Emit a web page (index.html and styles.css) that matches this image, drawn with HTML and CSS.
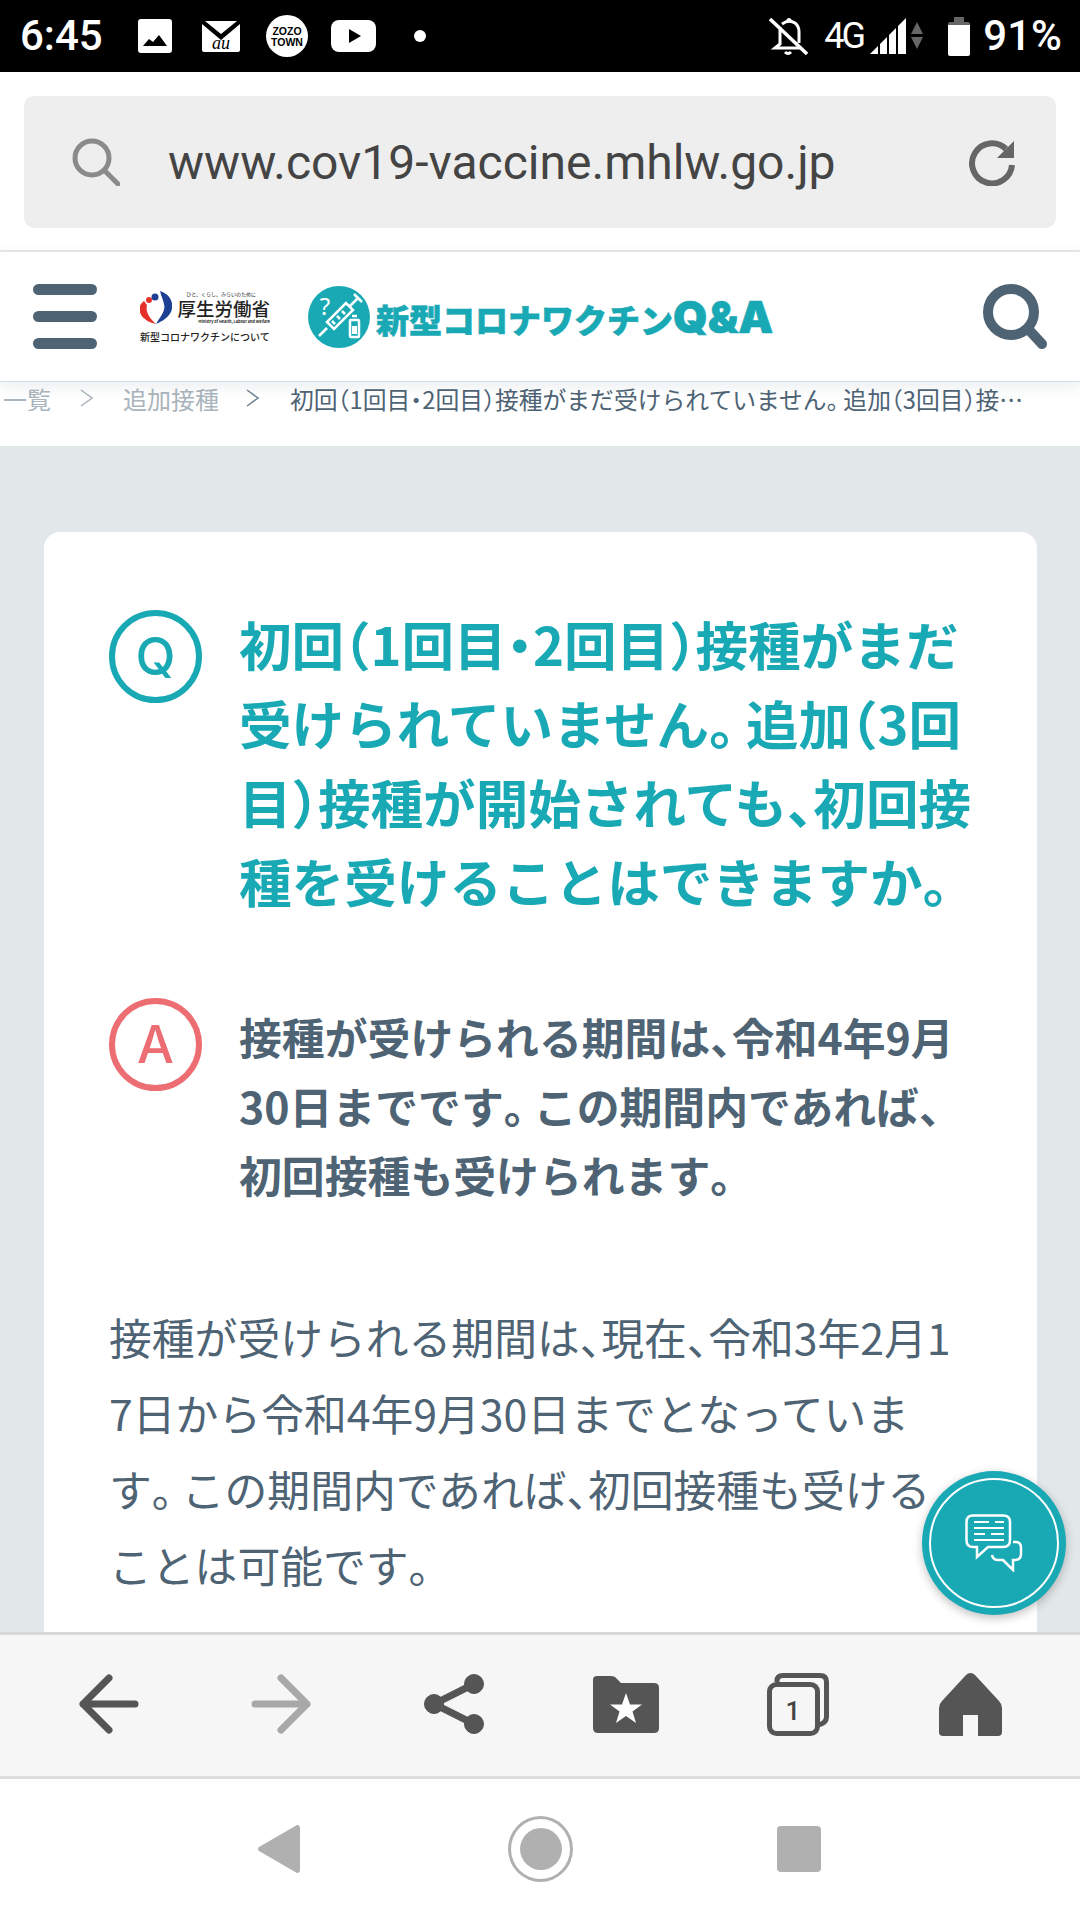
FILE: index.html
```html
<!DOCTYPE html>
<html lang="ja">
<head>
  <meta charset="UTF-8" />
  <title>新型コロナワクチンQ&amp;A</title>
  <meta name="viewport" content="width=device-width, initial-scale=1.0" />
  <link rel="stylesheet" href="styles.css">
</head>
<body>
  <div class="status-bar">
    <div class="status-left">
      <span class="status-time">6:45</span>
      <svg class="ico-image" width="34" height="34" viewBox="0 0 34 34"><rect width="34" height="34" rx="3" fill="#fff"/><path d="M5 27 L11 20 L15 23 L21 16 L29 27Z" fill="#000"/></svg>
      <svg class="ico-mail" width="38" height="31" viewBox="0 0 38 31"><path d="M3 0H35L19 13Z" fill="#fff"/><path d="M0 3L19 19L38 3V29Q38 31 36 31H2Q0 31 0 29Z" fill="#fff"/><text x="19" y="28" text-anchor="middle" class="mail-au">au</text></svg>
      <svg class="ico-zozo" width="42" height="42" viewBox="0 0 42 42"><circle cx="21" cy="21" r="21" fill="#fff"/><text x="21" y="20" text-anchor="middle" class="zozo-text">ZOZO</text><text x="21" y="31" text-anchor="middle" class="zozo-text">TOWN</text></svg>
      <svg class="ico-yt" width="45" height="32" viewBox="0 0 45 32"><rect width="45" height="32" rx="8" fill="#fff"/><path d="M18 9L30 16L18 23Z" fill="#000"/></svg>
      <span class="status-dot"></span>
    </div>
    <div class="status-right">
      <svg class="ico-bell" width="39" height="39" viewBox="0 0 39 39" fill="none" stroke="#fff" stroke-width="3"><path d="M11 10V27L6 31H31"/><path d="M13 7Q20 2 26 6Q30 9 30 15V26"/><path d="M16 35Q19 38 22 35"/><path d="M18 5Q20 0 22 5"/><path d="M1 2L38 37" stroke-width="3.500"/></svg>
      <span class="status-net">4G</span>
      <svg class="ico-signal" width="36" height="36" viewBox="0 0 36 36" fill="#fff"><path d="M0 36L8 28V36Z"/><path d="M10 36V26L17 19V36Z"/><path d="M19 36V17L26 10V36Z"/><path d="M28 36V8L36 0V36Z"/></svg>
      <svg class="ico-arrows" width="12" height="28" viewBox="0 0 12 28" fill="#666"><path d="M6 0L12 12H0Z"/><path d="M0 15H12L6 27Z"/></svg>
      <svg class="ico-battery" width="22" height="39" viewBox="0 0 22 39"><path d="M6 0H16V5H6Z" fill="#666"/><path d="M2 5H20Q22 5 22 7V9H0V7Q0 5 2 5Z" fill="#666"/><path d="M0 8H22V37Q22 39 20 39H2Q0 39 0 37Z" fill="#fff"/></svg>
      <span class="status-battery">91%</span>
    </div>
  </div>

  <div class="address-area">
    <div class="address-box">
      <svg width="48" height="48" viewBox="0 0 48 48" fill="none" stroke="#8a8a8a" stroke-width="5"><circle cx="20" cy="20" r="17"/><path d="M32 32L46 46" stroke-linecap="round"/></svg>
      <span class="address-url">www.cov19-vaccine.mhlw.go.jp</span>
      <svg width="48" height="48" viewBox="0 0 48 48" fill="none" stroke="#666" stroke-width="6"><path d="M38 11A20 20 0 1 0 44 27"/><path d="M46 3V20H29Z" fill="#666" stroke="none"/></svg>
    </div>
  </div>

  <header class="site-header">
    <div class="burger"><span></span><span></span><span></span></div>
    <div class="mhlw-logo">
      <div class="mhlw-top">
        <svg width="32" height="33" viewBox="0 0 32 33"><circle cx="9" cy="9" r="3" fill="#e4322b"/><circle cx="15" cy="6" r="3.500" fill="#1d3f94"/><path d="M20 0C33 4 35 17 29 24C25 29 20 31 16 33C20 26 26 20 24 13C23 9 21 4 20 0Z" fill="#1d3f94"/><path d="M4 10C-3 15 -1 24 5 28C8 31 12 32 16 33C11 28 5 22 7 14Z" fill="#e4322b"/></svg>
        <div class="mhlw-names">
          <span class="mhlw-tag">ひと、くらし、みらいのために</span>
          <span class="mhlw-name">厚生労働省</span>
          <span class="mhlw-en">Ministry of Health, Labour and Welfare</span>
        </div>
      </div>
      <div class="mhlw-sub">新型コロナワクチンについて</div>
    </div>
    <div class="qa-logo">
      <svg width="62" height="62" viewBox="0 0 62 62"><circle cx="31" cy="31" r="31" fill="#19a9b5"/><text x="17" y="29" text-anchor="middle" class="qa-mark">?</text><g fill="none" stroke="#fff" stroke-width="2.500"><path d="M11 50L19 42"/><path d="M19 36L26 43L45 24L38 17Z"/><path d="M42 20L50 12M46 8L54 16"/><path d="M24 35L27 38M29 30L32 33M34 25L37 28"/><rect x="42" y="34" width="9" height="17" rx="1"/><path d="M44 30H49"/></g><rect x="44" y="40" width="5" height="8" fill="#fff"/></svg>
      <span class="qa-title">新型コロナワクチン<span class="qa-latin">Q&amp;A</span></span>
    </div>
    <svg class="header-search" width="64" height="65" viewBox="0 0 64 65" fill="none" stroke="#4e6374"><circle cx="28" cy="28" r="23" stroke-width="10"/><path d="M46 46L59 60" stroke-width="10" stroke-linecap="round"/></svg>
  </header>

  <nav class="breadcrumb">
    <span class="crumb">一覧</span>
    <svg class="crumb-sep" width="13" height="18" viewBox="0 0 13 18" fill="none" stroke="#aab4bc" stroke-width="1.500"><path d="M1 1L12 9L1 17"/></svg>
    <span class="crumb">追加接種</span>
    <svg class="crumb-sep crumb-sep-last" width="13" height="18" viewBox="0 0 13 18" fill="none" stroke="#6f8290" stroke-width="1.500"><path d="M1 1L12 9L1 17"/></svg>
    <span class="crumb-current">初回<i>（</i>1回目<i>・</i>2回目<i>）</i>接種がまだ受けられていません<b>。</b>追加<i>（</i>3回目<i>）</i>接…</span>
  </nav>

  <main class="page">
    <article class="card">
      <div class="qa-row question">
        <span class="qa-badge badge-q">Q</span>
        <h1>初回<i>（</i>1回目<i>・</i>2回目<i>）</i>接種がまだ<br>受けられていません<b>。</b>追加<i>（</i>3回<br>目<i>）</i>接種が開始されても<i>、</i>初回接<br>種を受けることはできますか<b>。</b></h1>
      </div>
      <div class="qa-row answer">
        <span class="qa-badge badge-a">A</span>
        <p class="answer-text">接種が受けられる期間は<i>、</i>令和4年9月<br>30日までです<b>。</b>この期間内であれば<i>、</i><br>初回接種も受けられます<b>。</b></p>
      </div>
      <p class="body-text">接種が受けられる期間は<i>、</i>現在<i>、</i>令和3年2月1<br>7日から令和4年9月30日までとなっていま<br>す<b>。</b>この期間内であれば<i>、</i>初回接種も受ける<br>ことは可能です<b>。</b></p>
    </article>
    <div class="chat-fab">
      <svg width="58" height="58" viewBox="0 0 58 58" fill="none" stroke="#fff" stroke-width="2.500"><path d="M8 1.500H38Q45 1.500 45 8V26Q45 33 38 33H23L12 43V33H8Q1.500 33 1.500 26V8Q1.500 1.500 8 1.500Z"/><path d="M9 8H24M30 8H39M9 14H39M9 20H20M26 20H39M9 26H39" stroke-width="2"/><path d="M48 28H51Q56 28 56 34V40Q56 46 50 46H48V56L38 46H33Q28 46 27 41"/></svg>
    </div>
  </main>

  <div class="toolbar">
    <div class="tool">
      <svg width="60" height="60" viewBox="0 0 60 60" fill="none" stroke="#555" stroke-width="7" stroke-linecap="round" stroke-linejoin="round"><path d="M30 4L4 30L30 56M4 30H56"/></svg>
    </div>
    <div class="tool">
      <svg width="60" height="60" viewBox="0 0 60 60" fill="none" stroke="#a8a8a8" stroke-width="7" stroke-linecap="round" stroke-linejoin="round"><path d="M30 4L56 30L30 56M56 30H4"/></svg>
    </div>
    <div class="tool">
      <svg width="60" height="60" viewBox="0 0 60 60" fill="#555" stroke="#555"><path d="M50 10L10 30L50 50" fill="none" stroke-width="7"/><circle cx="50" cy="10" r="9.500"/><circle cx="10" cy="30" r="9.500"/><circle cx="50" cy="50" r="9.500"/></svg>
    </div>
    <div class="tool">
      <svg width="66" height="57" viewBox="0 0 66 57"><path d="M4 0H18Q22 0 24 3L28 7H61Q66 7 66 12V52Q66 57 61 57H5Q0 57 0 52V4Q0 0 4 0Z" fill="#555"/><path d="M33 17L37 28.500H49L39.500 35.500L43 47L33 40L23 47L26.500 35.500L17 28.500H29Z" fill="#fff"/></svg>
    </div>
    <div class="tool">
      <svg width="62" height="63" viewBox="0 0 62 63" fill="none" stroke="#555" stroke-width="5"><path d="M10 9V8Q10 2.500 16 2.500H53Q59.500 2.500 59.500 9V44Q59.500 50 51 52"/><rect x="2.500" y="11.500" width="48" height="49" rx="7"/><text x="26" y="47" text-anchor="middle" class="tab-count">1</text></svg>
    </div>
    <div class="tool">
      <svg width="63" height="63" viewBox="0 0 63 63"><path d="M31.500 0Q34 0 36 2L60 28Q63 31 63 35V59Q63 63 59 63H39V42H24V63H4Q0 63 0 59V35Q0 31 3 28L27 2Q29 0 31.500 0Z" fill="#555"/></svg>
    </div>
  </div>

  <div class="nav-bar">
    <svg width="42" height="48" viewBox="0 0 42 48"><path d="M39 0Q42 0 42 3V45Q42 48 39 48L1 26Q-1 24 1 22Z" fill="#b0b0b0"/></svg>
    <div class="nav-home"><span></span></div>
    <div class="nav-recent"></div>
  </div>
</body>
</html>
```

FILE: styles.css
```css
* {
  box-sizing: border-box;
  font-family: "Noto Sans CJK JP", "Noto Sans", sans-serif;
}

html, body {
  height: 100%;
}

body {
  margin: 0;
  width: 1080px;
  height: 1920px;
  overflow: hidden;
  display: flex;
  flex-direction: column;
  background: #fff;
  color: #4e6374;
}

svg {
  display: block;
  flex: none;
}

/* full-width punctuation is set half width on this site */
i {
  font-style: normal;
  font-feature-settings: "halt";
}

/* the full stop keeps a bit more room */
b {
  font-weight: inherit;
  letter-spacing: -0.3em;
}

/* status bar */
.status-bar {
  height: 72px;
  background: #000;
  color: #fff;
  display: flex;
  justify-content: space-between;
  align-items: center;
  padding: 0 18px 0 20px;
}

.status-left, .status-right {
  display: flex;
  align-items: center;
}

.status-time, .status-battery {
  font-family: Roboto, sans-serif;
  font-size: 42px;
  font-weight: 500;
  line-height: 72px;
}

.status-time {
  width: 80px;
}

.ico-image { margin-left: 38px; }
.ico-mail { margin-left: 30px; }
.ico-zozo { margin-left: 26px; }
.ico-yt { margin-left: 23px; }

.status-dot {
  width: 12px;
  height: 12px;
  border-radius: 50%;
  background: #fff;
  margin-left: 38px;
}

.mail-au {
  font-family: "Liberation Serif", serif;
  font-style: italic;
  font-size: 18px;
  fill: #000;
}

.zozo-text {
  font-family: "Liberation Sans", sans-serif;
  font-size: 10.500px;
  font-weight: 700;
  fill: #000;
}

.status-net {
  font-family: Roboto, sans-serif;
  font-size: 36px;
  margin-left: 16px;
  letter-spacing: -3px;
  width: 42px;
}

.ico-signal { margin-left: 4px; }
.ico-arrows { margin-left: 5px; }
.ico-battery { margin-left: 25px; }
.status-battery { margin-left: 13px; }

/* address bar */
.address-area {
  height: 180px;
  padding: 24px 24px 0;
  border-bottom: 2px solid #e8e8e8;
}

.address-box {
  height: 132px;
  background: #eee;
  border-radius: 10px;
  display: flex;
  align-items: center;
  padding: 0 40px 0 48px;
}

.address-url {
  flex: 1;
  margin-left: 48px;
  font-family: Roboto, sans-serif;
  font-size: 48px;
  color: #444;
}

/* site header */
.site-header {
  height: 130px;
  display: flex;
  align-items: center;
  padding-left: 33px;
  background: #fff;
  border-bottom: 1px solid #cfe3e6;
  box-shadow: 0 4px 14px rgba(78, 99, 116, 0.12);
  position: relative;
}

.burger {
  width: 64px;
  display: flex;
  flex-direction: column;
  gap: 16px;
}

.burger span {
  height: 11px;
  border-radius: 6px;
  background: #4e6374;
}

.mhlw-logo {
  width: 130px;
  margin-left: 43px;
  color: #222;
}

.mhlw-top {
  display: flex;
  align-items: center;
  gap: 6px;
}

.mhlw-names {
  display: flex;
  flex-direction: column;
  align-items: flex-end;
  width: 92px;
}

.mhlw-tag {
  font-size: 5px;
  line-height: 7px;
  white-space: nowrap;
  margin-right: 14px;
}

.mhlw-name {
  font-size: 18.500px;
  font-weight: 500;
  line-height: 22px;
  white-space: nowrap;
}

.mhlw-en {
  font-size: 3.800px;
  font-weight: 700;
  line-height: 6px;
  white-space: nowrap;
}

.mhlw-sub {
  font-size: 10px;
  font-weight: 500;
  line-height: 14px;
  margin-top: 5px;
  white-space: nowrap;
}

.qa-logo {
  display: flex;
  align-items: center;
  margin-left: 38px;
}

.qa-mark {
  font-family: "Noto Sans", sans-serif;
  font-size: 24px;
  fill: #fff;
}

.qa-title {
  margin-left: 6px;
  font-size: 33px;
  font-weight: 900;
  color: #19a9b5;
  white-space: nowrap;
  -webkit-text-stroke: 0.6px #19a9b5;
}

.qa-latin {
  font-family: Inter, sans-serif;
  font-size: 44px;
  font-weight: 900;
}

.header-search {
  margin-left: auto;
  margin-right: 33px;
}

/* breadcrumb */
.breadcrumb {
  height: 64px;
  display: flex;
  align-items: center;
  padding: 0 0 32px 3px;
  font-size: 24px;
  white-space: nowrap;
  background: #fff;
}

.crumb {
  color: #aab4bc;
}

.crumb-sep {
  margin: 0 30px 0 29px;
}

.crumb-sep-last {
  margin: 0 31px 0 27px;
}

.crumb-current {
  font-size: 23.800px;
  color: #4e6374;
}

/* main content */
.page {
  flex: 1;
  min-height: 0;
  overflow: hidden;
  position: relative;
  background: #e2e7ea;
  padding: 86px 43px 0 44px;
}

.card {
  background: #fff;
  border-radius: 16px;
  padding: 78px 65px 160px;
}

.qa-row {
  display: flex;
  gap: 37px;
  align-items: flex-start;
}

.qa-badge {
  flex: none;
  width: 93px;
  height: 93px;
  border-radius: 50%;
  border-width: 6px;
  border-style: solid;
  display: flex;
  align-items: center;
  justify-content: center;
  font-family: Inter, sans-serif;
  font-size: 52px;
  font-weight: 500;
}

.badge-q {
  color: #19a9b5;
  border-color: #19a9b5;
}

.badge-a {
  color: #ec6e73;
  border-color: #ec6e73;
}

h1 {
  margin: -6px -6px 0 0;
  font-size: 52.600px;
  line-height: 79px;
  font-weight: 700;
  color: #19a9b5;
}

.answer {
  margin-top: 78px;
}

.answer-text {
  margin: 0 -6px 0 0;
  padding-top: 4px;
  font-size: 42.850px;
  line-height: 69px;
  font-weight: 700;
}

.body-text {
  margin: 89px -6px 0 0;
  font-size: 42.800px;
  line-height: 76px;
}

.chat-fab {
  position: absolute;
  left: 922px;
  top: 1025px;
  width: 144px;
  height: 144px;
  border-radius: 50%;
  background: #19a9b5;
  box-shadow: 0 3px 10px rgba(0, 0, 0, 0.25);
  display: flex;
  align-items: center;
  justify-content: center;
}

.chat-fab::after {
  content: "";
  position: absolute;
  inset: 7px;
  border: 2px solid #fff;
  border-radius: 50%;
}

/* browser toolbar */
.toolbar {
  height: 147px;
  display: grid;
  grid-template-columns: repeat(6, 1fr);
  align-items: center;
  padding: 0 23px 3px;
  background: #f6f6f6;
  border-top: 3px solid #d8d8d8;
  border-bottom: 3px solid #ddd;
}

.tool {
  display: flex;
  justify-content: center;
}

.tab-count {
  font-family: Roboto, sans-serif;
  font-size: 26px;
  font-weight: 500;
  fill: #444;
  stroke: none;
}

/* android nav */
.nav-bar {
  height: 141px;
  display: flex;
  align-items: center;
  padding: 0 0 2px 258px;
  background: #fff;
}

.nav-home {
  width: 65px;
  height: 66px;
  margin-left: 208px;
  border: 3px solid #b0b0b0;
  border-radius: 50%;
  display: flex;
  align-items: center;
  justify-content: center;
}

.nav-home span {
  width: 42px;
  height: 42px;
  border-radius: 50%;
  background: #b0b0b0;
}

.nav-recent {
  width: 44px;
  height: 46px;
  margin-left: 204px;
  border-radius: 4px;
  background: #b0b0b0;
}
```
